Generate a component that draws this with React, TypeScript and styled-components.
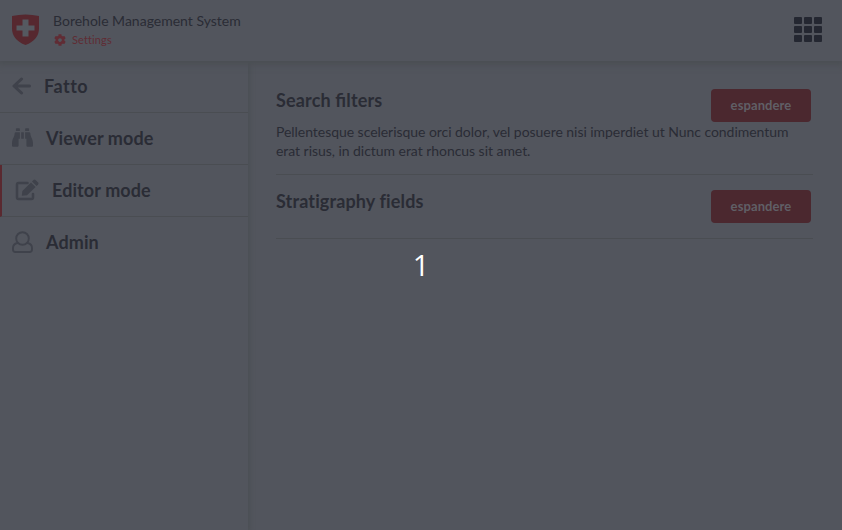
import React from "react";
import styled, { createGlobalStyle } from "styled-components";
import { FaBinoculars, FaCog } from "react-icons/fa";

const Global = createGlobalStyle`
  * { box-sizing: border-box; }
  body { margin: 0; background: #52555d; overflow: hidden; }
`;

const Page = styled.div`
  position: relative;
  display: flex;
  flex-direction: column;
  height: 530px;
  background: #52555d;
  color: #2a2c35;
  font-family: Lato, "Liberation Sans", sans-serif;
`;

const Header = styled.header`
  display: flex;
  align-items: center;
  flex: none;
  height: 61px;
  padding: 0 20px 0 12px;
  box-shadow: 0 2px 6px 2px #4b4f54;
  background: #52555d;
  z-index: 1;
`;

const Shield = styled.svg`
  width: 28px;
  height: 31px;
  margin: 0 13px 2px 0;
`;

const Brand = styled.div`
  flex: 1;
  padding-bottom: 1px;
`;

const AppTitle = styled.div`
  font-size: 14px;
  line-height: 20px;
`;

const Settings = styled.div`
  display: flex;
  align-items: center;
  gap: 6px;
  height: 17px;
  margin-bottom: 1px;
  padding-left: 1px;
  color: #602c34;
  font-size: 11px;
  letter-spacing: 0.12px;
  font-variant-ligatures: none;
`;

const AppGrid = styled.div`
  display: grid;
  grid-template-columns: repeat(3, 8px);
  grid-auto-rows: 7px;
  gap: 2px;
  margin-bottom: 2px;
`;

const Tile = styled.span`
  border-radius: 1px;
  background: #242731;
`;

const Body = styled.div`
  display: flex;
  flex: 1;
`;

const Sidebar = styled.nav`
  width: 248px;
  margin-right: 1px;
  box-shadow: 1px 0 4px 1px #4b4f54;
`;

const MenuRow = styled.div<{ $active?: boolean; $last?: boolean; $spacing?: number }>`
  display: flex;
  align-items: center;
  gap: 13px;
  height: 52px;
  padding: 0 0 2px ${(p) => (p.$active ? 13 : 12)}px;
  border-left: ${(p) => (p.$active ? "2px solid #5a2930" : "0")};
  border-bottom: 1px solid ${(p) => (p.$last ? "transparent" : "#4a4d52")};
  font-size: 18px;
  font-weight: 700;
  letter-spacing: ${(p) => p.$spacing ?? 0.1}px;
  font-variant-ligatures: none;

  svg {
    flex: none;
    color: #3f424b;
  }
`;

const LineIcon = styled.svg`
  fill: none;
  stroke: currentColor;
  stroke-linecap: round;
  stroke-linejoin: round;
`;

const Content = styled.main`
  flex: 1;
  padding: 13px 29px 0 27px;
`;

const Section = styled.section<{ $height: number }>`
  height: ${(p) => p.$height}px;
  padding-top: 15px;
  border-bottom: 1px solid #4a4d52;
`;

const SectionHead = styled.div`
  display: flex;
  justify-content: space-between;
  height: 33px;
  padding-right: 2px;
`;

const Heading = styled.h3<{ $joined?: boolean }>`
  margin: 0;
  font-size: 18px;
  line-height: 22px;
  letter-spacing: ${(p) => (p.$joined ? 0.15 : 0.13)}px;
  font-feature-settings: "liga" ${(p) => (p.$joined ? 1 : 0)};
`;

const Description = styled.p`
  margin: 0;
  font-size: 14px;
  line-height: 19px;
  letter-spacing: -0.045px;
`;

const Expand = styled.button`
  width: 100px;
  height: 33px;
  padding: 0 0 2px;
  border: 0;
  border-radius: 4px;
  background: #4b282f;
  color: #605f66;
  font: 700 13px Lato, sans-serif;
  letter-spacing: 0.1px;
`;

const Countdown = styled.div`
  position: absolute;
  inset: 0;
  z-index: 2;
  display: flex;
  align-items: center;
  justify-content: center;
  padding-bottom: 1px;
  color: #fff;
  font: 29px "Open Sans", "Noto Sans", sans-serif;
`;

export default function App() {
  return (
    <Page>
      <Global />
      <Header>
        <Shield viewBox="0 0 28 31">
          <path d="M0 2Q13.5-1 27 2V14Q27 26 13.5 31Q0 26 0 14Z" fill="#56282f" />
          <path d="M10.5 5.5h6v6h6v5h-6v6h-6v-6h-6v-5h6z" fill="#555960" />
        </Shield>
        <Brand>
          <AppTitle>Borehole Management System</AppTitle>
          <Settings><FaCog size={12} />Settings</Settings>
        </Brand>
        <AppGrid>
          {Array.from({ length: 9 }, (_, i) => <Tile key={i} />)}
        </AppGrid>
      </Header>
      <Body>
        <Sidebar>
          <MenuRow $spacing={0.5}>
            <LineIcon width="19" height="18" viewBox="0 0 19 18" strokeWidth="3">
              <path d="M9.5 2L2 9l7.500 7M2.500 9H17.500" />
            </LineIcon>
            Fatto
          </MenuRow>
          <MenuRow><FaBinoculars size={21} />Viewer mode</MenuRow>
          <MenuRow $active>
            <LineIcon width="24" height="22" viewBox="0 0 24 22" strokeWidth="2.500">
              <path d="M12.500 4H3.500Q2 4 2 5.500V18.500Q2 20 3.500 20H16.500Q18 20 18 18.500V15" />
              <path d="M6.800 16.800L7.400 12 16 3.400 20.600 8 12 16.200Z" fill="currentColor" stroke="none" />
              <path d="M17 2.400L18.500 .9Q19.500 0 20.500 .9L23.100 3.500Q24 4.500 23.100 5.500L21.600 7Z" fill="currentColor" stroke="none" />
            </LineIcon>
            Editor mode
          </MenuRow>
          <MenuRow $last>
            <LineIcon width="21" height="22" viewBox="0 0 21 22" strokeWidth="1.900">
              <circle cx="10.500" cy="7.500" r="6.300" />
              <path d="M5.500 12Q1 13 1 17V18.500Q1 21 3.500 21H17.500Q20 21 20 18.500V17Q20 13 15.500 12" />
            </LineIcon>
            Admin
          </MenuRow>
        </Sidebar>
        <Content>
          <Section $height={101}>
            <SectionHead><Heading $joined>Search filters</Heading><Expand>espandere</Expand></SectionHead>
            <Description>Pellentesque scelerisque orci dolor, vel posuere nisi imperdiet ut Nunc condimentum erat risus, in dictum erat rhoncus sit amet.</Description>
          </Section>
          <Section $height={64}>
            <SectionHead><Heading>Stratigraphy fields</Heading><Expand>espandere</Expand></SectionHead>
          </Section>
        </Content>
      </Body>
      <Countdown>1</Countdown>
    </Page>
  );
}
